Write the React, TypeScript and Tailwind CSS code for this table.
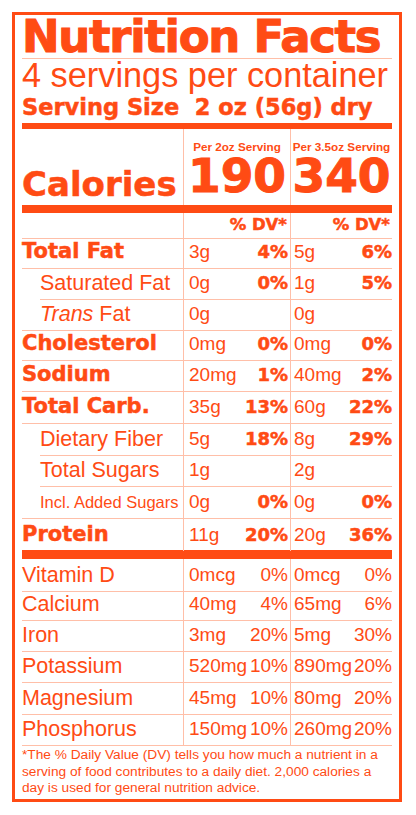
import React from "react";

const BLACK = "font-['DejaVu_Sans',sans-serif] font-bold";
const LINE = "border-[#ffbfa8]";
const STROKE_S = "[-webkit-text-stroke:0.5px_#ff4b14]";
const STROKE_L = "[-webkit-text-stroke:1px_#ff4b14]";

type Row = {
  name: React.ReactNode;
  bold?: boolean;
  indentText?: boolean;
  indentLine?: boolean;
  small?: boolean;
  noLine?: boolean;
  h: string;
  v1: string;
  p1: string;
  v2: string;
  p2: string;
};

const rows: Row[] = [
  { name: "Total Fat", bold: true, h: "h-[31px]", v1: "3g", p1: "4%", v2: "5g", p2: "6%" },
  { name: "Saturated Fat", indentText: true, indentLine: true, h: "h-[31px]", v1: "0g", p1: "0%", v2: "1g", p2: "5%" },
  {
    name: (
      <span>
        <i>Trans</i> Fat
      </span>
    ),
    indentText: true,
    h: "h-[30px]",
    v1: "0g",
    p1: "",
    v2: "0g",
    p2: "",
  },
  { name: "Cholesterol", bold: true, h: "h-[31px]", v1: "0mg", p1: "0%", v2: "0mg", p2: "0%" },
  { name: "Sodium", bold: true, h: "h-[32px]", v1: "20mg", p1: "1%", v2: "40mg", p2: "2%" },
  { name: "Total Carb.", bold: true, h: "h-[32px]", v1: "35g", p1: "13%", v2: "60g", p2: "22%" },
  { name: "Dietary Fiber", indentText: true, indentLine: true, h: "h-[31px]", v1: "5g", p1: "18%", v2: "8g", p2: "29%" },
  { name: "Total Sugars", indentText: true, indentLine: true, h: "h-[32px]", v1: "1g", p1: "", v2: "2g", p2: "" },
  { name: "Incl. Added Sugars", indentText: true, small: true, h: "h-[33px]", v1: "0g", p1: "0%", v2: "0g", p2: "0%" },
  { name: "Protein", bold: true, noLine: true, h: "h-[31px]", v1: "11g", p1: "20%", v2: "20g", p2: "36%" },
];

const vitamins = [
  { name: "Vitamin D", h: "h-[29px]", v1: "0mcg", p1: "0%", v2: "0mcg", p2: "0%" },
  { name: "Calcium", h: "h-[31px]", v1: "40mg", p1: "4%", v2: "65mg", p2: "6%" },
  { name: "Iron", h: "h-[31px]", v1: "3mg", p1: "20%", v2: "5mg", p2: "30%" },
  { name: "Potassium", h: "h-[32px]", v1: "520mg", p1: "10%", v2: "890mg", p2: "20%" },
  { name: "Magnesium", h: "h-[31px]", v1: "45mg", p1: "10%", v2: "80mg", p2: "20%" },
  { name: "Phosphorus", h: "h-[31px]", v1: "150mg", p1: "10%", v2: "260mg", p2: "20%" },
];

function MainRow({ r }: { r: Row }) {
  const b = r.noLine ? "" : `border-b ${LINE}`;
  const labelPos = r.indentLine ? "ml-[18px]" : r.indentText ? "pl-[18px]" : "";
  const labelFont = r.bold
    ? `${BLACK} ${STROKE_S} text-[21px]`
    : r.small
    ? "text-[16.5px]"
    : "text-[21.5px]";
  return (
    <div className={`grid grid-cols-[161px_107px_102px] ${r.h}`}>
      <div className={`flex items-center whitespace-nowrap ${b} ${labelPos} ${labelFont}`}>{r.name}</div>
      <div className={`flex items-center border-l ${LINE} ${b} pl-[5px] pr-[2px]`}>
        <div className="flex w-full items-baseline justify-between whitespace-nowrap">
          <span className="text-[19px]">{r.v1}</span>
          <span className={`${BLACK} ${STROKE_S} text-[18px]`}>{r.p1}</span>
        </div>
      </div>
      <div className={`flex items-center border-l ${LINE} ${b} pl-[3px]`}>
        <div className="flex w-full items-baseline justify-between whitespace-nowrap -mr-[2px]">
          <span className="text-[19px]">{r.v2}</span>
          <span className={`${BLACK} ${STROKE_S} text-[18px]`}>{r.p2}</span>
        </div>
      </div>
    </div>
  );
}

function VitRow({ r }: { r: (typeof vitamins)[number] }) {
  const b = `border-b ${LINE}`;
  return (
    <div className={`grid grid-cols-[161px_107px_102px] ${r.h}`}>
      <div className={`flex items-center whitespace-nowrap text-[21.5px] ${b}`}>{r.name}</div>
      <div className={`flex items-center border-l ${LINE} ${b} pl-[5px] pr-[2px]`}>
        <div className="flex w-full items-baseline justify-between whitespace-nowrap text-[19px]">
          <span>{r.v1}</span>
          <span>{r.p1}</span>
        </div>
      </div>
      <div className={`flex items-center border-l ${LINE} ${b} pl-[3px]`}>
        <div className="flex w-full items-baseline justify-between whitespace-nowrap text-[19px] -mr-[2px]">
          <span>{r.v2}</span>
          <span>{r.p2}</span>
        </div>
      </div>
    </div>
  );
}

export default function App() {
  return (
    <div className="w-[416px] h-[815px] bg-white pt-[12px] pl-[12px]">
      <div className="w-[390px] h-[790px] border-[3px] border-[#ff4b14] px-[7px] text-[#ff4b14] font-['Liberation_Sans',Arial,sans-serif]">
        <div className={`mt-[1px] h-[42px] leading-[42px] text-[45px] tracking-[-1.3px] whitespace-nowrap ${BLACK} ${STROKE_L}`}>
          Nutrition Facts
        </div>
        <div className="h-px bg-[#ffbfa8]" />
        <div className="h-[32px] leading-[32px] text-[34.3px] whitespace-nowrap">4 servings per container</div>
        <div className={`h-[32px] leading-[32px] text-[22.5px] whitespace-nowrap ${BLACK} ${STROKE_S}`}>
          Serving Size&nbsp; 2 oz (56g) dry
        </div>
        <div className="h-[6px] bg-[#ff4b14]" />
        <div className="grid grid-cols-[161px_107px_102px] h-[76px]">
          <div className={`flex items-end pb-[4px] text-[34px] leading-[34px] whitespace-nowrap ${BLACK} ${STROKE_S}`}>Calories</div>
          <div className={`flex flex-col items-center border-l ${LINE} pt-[12px]`}>
            <div className="text-[11.7px] leading-[12px] font-bold whitespace-nowrap">Per 2oz Serving</div>
            <div className={`text-[47px] leading-[46px] ${BLACK} ${STROKE_L}`}>190</div>
          </div>
          <div className={`flex flex-col items-center border-l ${LINE} pt-[12px]`}>
            <div className="text-[11.7px] leading-[12px] font-bold whitespace-nowrap">Per 3.5oz Serving</div>
            <div className={`text-[47px] leading-[46px] ${BLACK} ${STROKE_L}`}>340</div>
          </div>
        </div>
        <div className="h-[8px] bg-[#ff4b14]" />
        <div className={`grid grid-cols-[161px_107px_102px] h-[23px]`}>
          <div className={`border-b ${LINE}`} />
          <div className={`flex items-center justify-end border-l border-b ${LINE} pr-[3px] text-[16.5px] ${BLACK} ${STROKE_S}`}>
            % DV*
          </div>
          <div className={`flex items-center justify-end border-l border-b ${LINE} pr-[2px] text-[16.5px] ${BLACK} ${STROKE_S}`}>
            % DV*
          </div>
        </div>
        {rows.map((r, i) => (
          <MainRow key={i} r={r} />
        ))}
        <div className="h-[9px] bg-[#ff4b14]" />
        {vitamins.map((r, i) => (
          <VitRow key={i} r={r} />
        ))}
        <div className="pt-[3px] text-[13.7px] leading-[16.6px]">
          <div className="whitespace-nowrap">*The % Daily Value (DV) tells you how much a nutrient in a</div>
          <div className="whitespace-nowrap">serving of food contributes to a daily diet. 2,000 calories a</div>
          <div className="whitespace-nowrap">day is used for general nutrition advice.</div>
        </div>
      </div>
    </div>
  );
}
